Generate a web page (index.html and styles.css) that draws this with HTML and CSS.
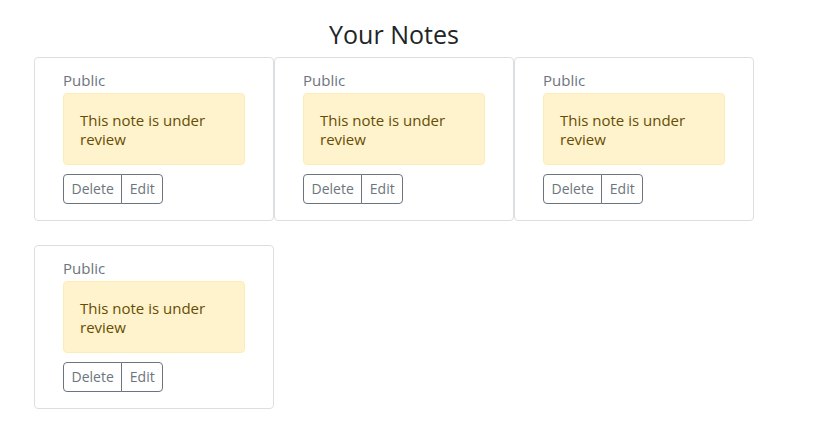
FILE: index.html
```html
<!DOCTYPE html>
<html>
<head>
<meta charset="utf-8">
<link rel="stylesheet" href="styles.css">
</head>
<body>
<main class="page">
  <h2 class="title">Your Notes</h2>
  <div class="grid">
    <div class="card">
      <div class="label">Public</div>
      <div class="alert">This note is under review</div>
      <div class="btn-group"><button class="btn">Delete</button><button class="btn">Edit</button></div>
    </div>
    <div class="card">
      <div class="label">Public</div>
      <div class="alert">This note is under review</div>
      <div class="btn-group"><button class="btn">Delete</button><button class="btn">Edit</button></div>
    </div>
    <div class="card">
      <div class="label">Public</div>
      <div class="alert">This note is under review</div>
      <div class="btn-group"><button class="btn">Delete</button><button class="btn">Edit</button></div>
    </div>
    <div class="card">
      <div class="label">Public</div>
      <div class="alert">This note is under review</div>
      <div class="btn-group"><button class="btn">Delete</button><button class="btn">Edit</button></div>
    </div>
  </div>
</main>
</body>
</html>
```

FILE: styles.css
```css
* { box-sizing: border-box; }
html, body { margin: 0; padding: 0; background: #fff; }
body {
  font-family: "Open Sans", "Noto Sans", sans-serif;
  color: #212529;
  font-size: 16px;
}
.page {
  width: 720px;
  margin-left: 34px;
  display: flex;
  flex-direction: column;
}
.title {
  margin: 18px 0 7px;
  font-size: 25px;
  font-weight: 400;
  line-height: 32px;
  text-align: center;
  color: #212529;
}
.grid {
  display: grid;
  grid-template-columns: repeat(3, 240px);
  row-gap: 24px;
  align-items: start;
}
.card {
  border: 1px solid #dcdfe2;
  border-radius: 4px;
  padding: 12px 28px 16px;
  display: flex;
  flex-direction: column;
  align-items: flex-start;
}
.label {
  color: #6c757d;
  font-size: 15px;
  line-height: 20px;
  margin-bottom: 3px;
}
.alert {
  align-self: stretch;
  background: #fff3cd;
  border: 1px solid #ffecb5;
  border-radius: 4px;
  color: #664d03;
  padding: 17px 16px 15px;
  font-size: 15px;
  line-height: 19px;
  margin-bottom: 9px;
}
.btn-group {
  display: flex;
}
.btn {
  font-family: inherit;
  font-size: 14px;
  line-height: 18px;
  color: #6c757d;
  background: #fff;
  border: 1px solid #6c757d;
  padding: 5px 7.5px;
  height: 30px;
  margin: 0;
}
.btn:first-child {
  border-radius: 4px 0 0 4px;
}
.btn:last-child {
  border-radius: 0 4px 4px 0;
  margin-left: -1px;
}
```
